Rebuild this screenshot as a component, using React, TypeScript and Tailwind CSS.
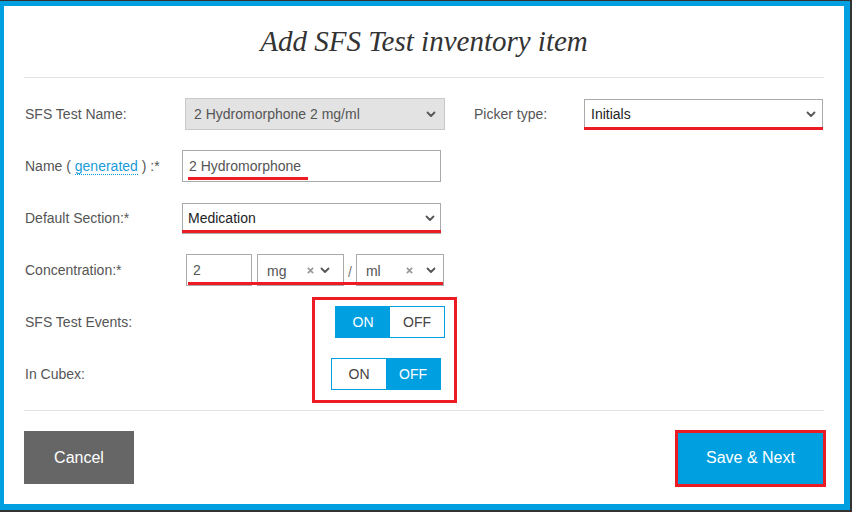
// Add inventory item dialog, with the red review marks drawn over the form.

const BLUE = "bg-[#009fdf]";

function Chevron() {
  return (
    <svg width={10} height={7} viewBox="0 0 10 7" fill="none" stroke="#555" strokeWidth={1.8} strokeLinecap="round" strokeLinejoin="round" aria-hidden>
      <path d="M1.5 1.5 5 5l3.5-3.5" />
    </svg>
  );
}

function Clear() {
  return (
    <svg width={7} height={7} viewBox="0 0 8 8" fill="none" stroke="#9a9a9a" strokeWidth={2} aria-hidden>
      <path d="M1 1l6 6M7 1 1 7" />
    </svg>
  );
}

function Mark({ className }: { className: string }) {
  return <div className={`pointer-events-none absolute h-[3px] bg-[#ed1c24] ${className}`} />;
}

function Label({ children }: { children: React.ReactNode }) {
  return <div className="w-[158px] shrink-0 pl-px text-[14px] text-[#555]">{children}</div>;
}

function Toggle({ on, className }: { on: boolean; className: string }) {
  return (
    <div className={`flex h-[32px] w-[110px] border border-[#009fdf] text-[14px] ${className}`}>
      <div className={`flex flex-1 items-center justify-center ${on ? `${BLUE} text-white` : "bg-white text-[#444]"}`}>ON</div>
      <div className={`flex flex-1 items-center justify-center ${on ? "bg-white text-[#444]" : `${BLUE} text-white`}`}>OFF</div>
    </div>
  );
}

export default function App() {
  return (
    <div className="h-[512px] w-[852px] bg-[#333] pb-[2px] pr-[2px] pt-px font-['Liberation_Sans',Arial,sans-serif]">
      <div className="relative h-full border-b-[6px] border-l-4 border-r-[6px] border-t-[5px] border-[#009fdf] bg-white px-5">
        <div className="flex h-[71px] items-center justify-center">
          <h1 className="font-['Liberation_Serif','Times_New_Roman',serif] text-[29px] italic text-[#333]">
            Add SFS Test inventory item
          </h1>
        </div>
        <div className="border-t border-[#e3e3e3]" />

        <div className="pt-[10px]">
          <div className="flex h-[52px] items-center">
            <Label>SFS Test Name:</Label>
            <div className="ml-[3px] flex h-[32px] w-[260px] items-center justify-between border border-[#c9c9c9] bg-[#e3e3e3] pl-[8px] pr-[8px] text-[14px] text-[#555]">
              <span>2 Hydromorphone 2 mg/ml</span>
              <Chevron />
            </div>
            <div className="ml-[29px] w-[110px] text-[14px] text-[#555]">Picker type:</div>
            <div className="relative flex h-[31px] w-[239px] items-center justify-between border border-[#aaa] pl-[6px] pr-[6px] text-[14px] text-[#222]">
              <span>Initials</span>
              <Chevron />
              <Mark className="-bottom-px -left-px -right-px" />
            </div>
          </div>

          <div className="flex h-[52px] items-center">
            <Label>
              Name ({" "}
              <span className="border-b border-dotted border-[#009fdf] text-[#1b9bd8]">generated</span> ) :*
            </Label>
            <div className="relative flex h-[32px] w-[259px] items-center border border-[#aaa] pl-[6px] text-[14px] text-[#555]">
              2 Hydromorphone
              <Mark className="left-[5px] top-[26px] w-[120px]" />
            </div>
          </div>

          <div className="flex h-[52px] items-center">
            <Label>Default Section:*</Label>
            <div className="relative flex h-[31px] w-[259px] items-center justify-between border border-[#aaa] pl-[5px] pr-[5px] text-[14px] text-[#222]">
              <span>Medication</span>
              <Chevron />
              <Mark className="-left-px top-[26px] w-[259px]" />
            </div>
          </div>

          <div className="flex h-[52px] items-center">
            <Label>Concentration:*</Label>
            <div className="relative ml-[4px] flex h-[32px] items-center text-[14px] text-[#555]">
              <div className="flex h-[32px] w-[66px] items-center border border-[#aaa] pl-[6px]">2</div>
              <div className="ml-[5px] flex h-[32px] w-[87px] items-center border border-[#aaa] pl-[9px] pr-[13px]">
                <span className="flex-1 pt-[3px]">mg</span>
                <Clear />
                <span className="ml-[6px]"><Chevron /></span>
              </div>
              <span className="mx-[4px] pt-[4px] text-[#777]">/</span>
              <div className="flex h-[32px] w-[88px] items-center border border-[#aaa] pl-[9px] pr-[7px]">
                <span className="flex-1 pt-[3px]">ml</span>
                <Clear />
                <span className="ml-[13px]"><Chevron /></span>
              </div>
              <Mark className="left-[2px] top-[28px] w-[255px]" />
            </div>
          </div>

          <div className="flex h-[52px] items-center">
            <Label>SFS Test Events:</Label>
            <Toggle on className="ml-[153px]" />
          </div>

          <div className="flex h-[52px] items-center">
            <Label>In Cubex:</Label>
            <Toggle on={false} className="ml-[149px]" />
          </div>
        </div>

        <div className="mt-[10px] border-t border-[#e3e3e3]" />

        <div className="flex items-start justify-between pt-[20px]">
          <button className="h-[53px] w-[110px] bg-[#666] text-[16px] text-white">Cancel</button>
          <div className="-mr-[2px] -mt-px border-[3px] border-[#ed1c24]">
            <button className={`h-[51px] w-[145px] ${BLUE} pb-[2px] text-[16px] text-white`}>Save &amp; Next</button>
          </div>
        </div>

        <div className="pointer-events-none absolute left-[308px] top-[291px] h-[106px] w-[145px] border-[3px] border-[#ed1c24]" />
      </div>
    </div>
  );
}
